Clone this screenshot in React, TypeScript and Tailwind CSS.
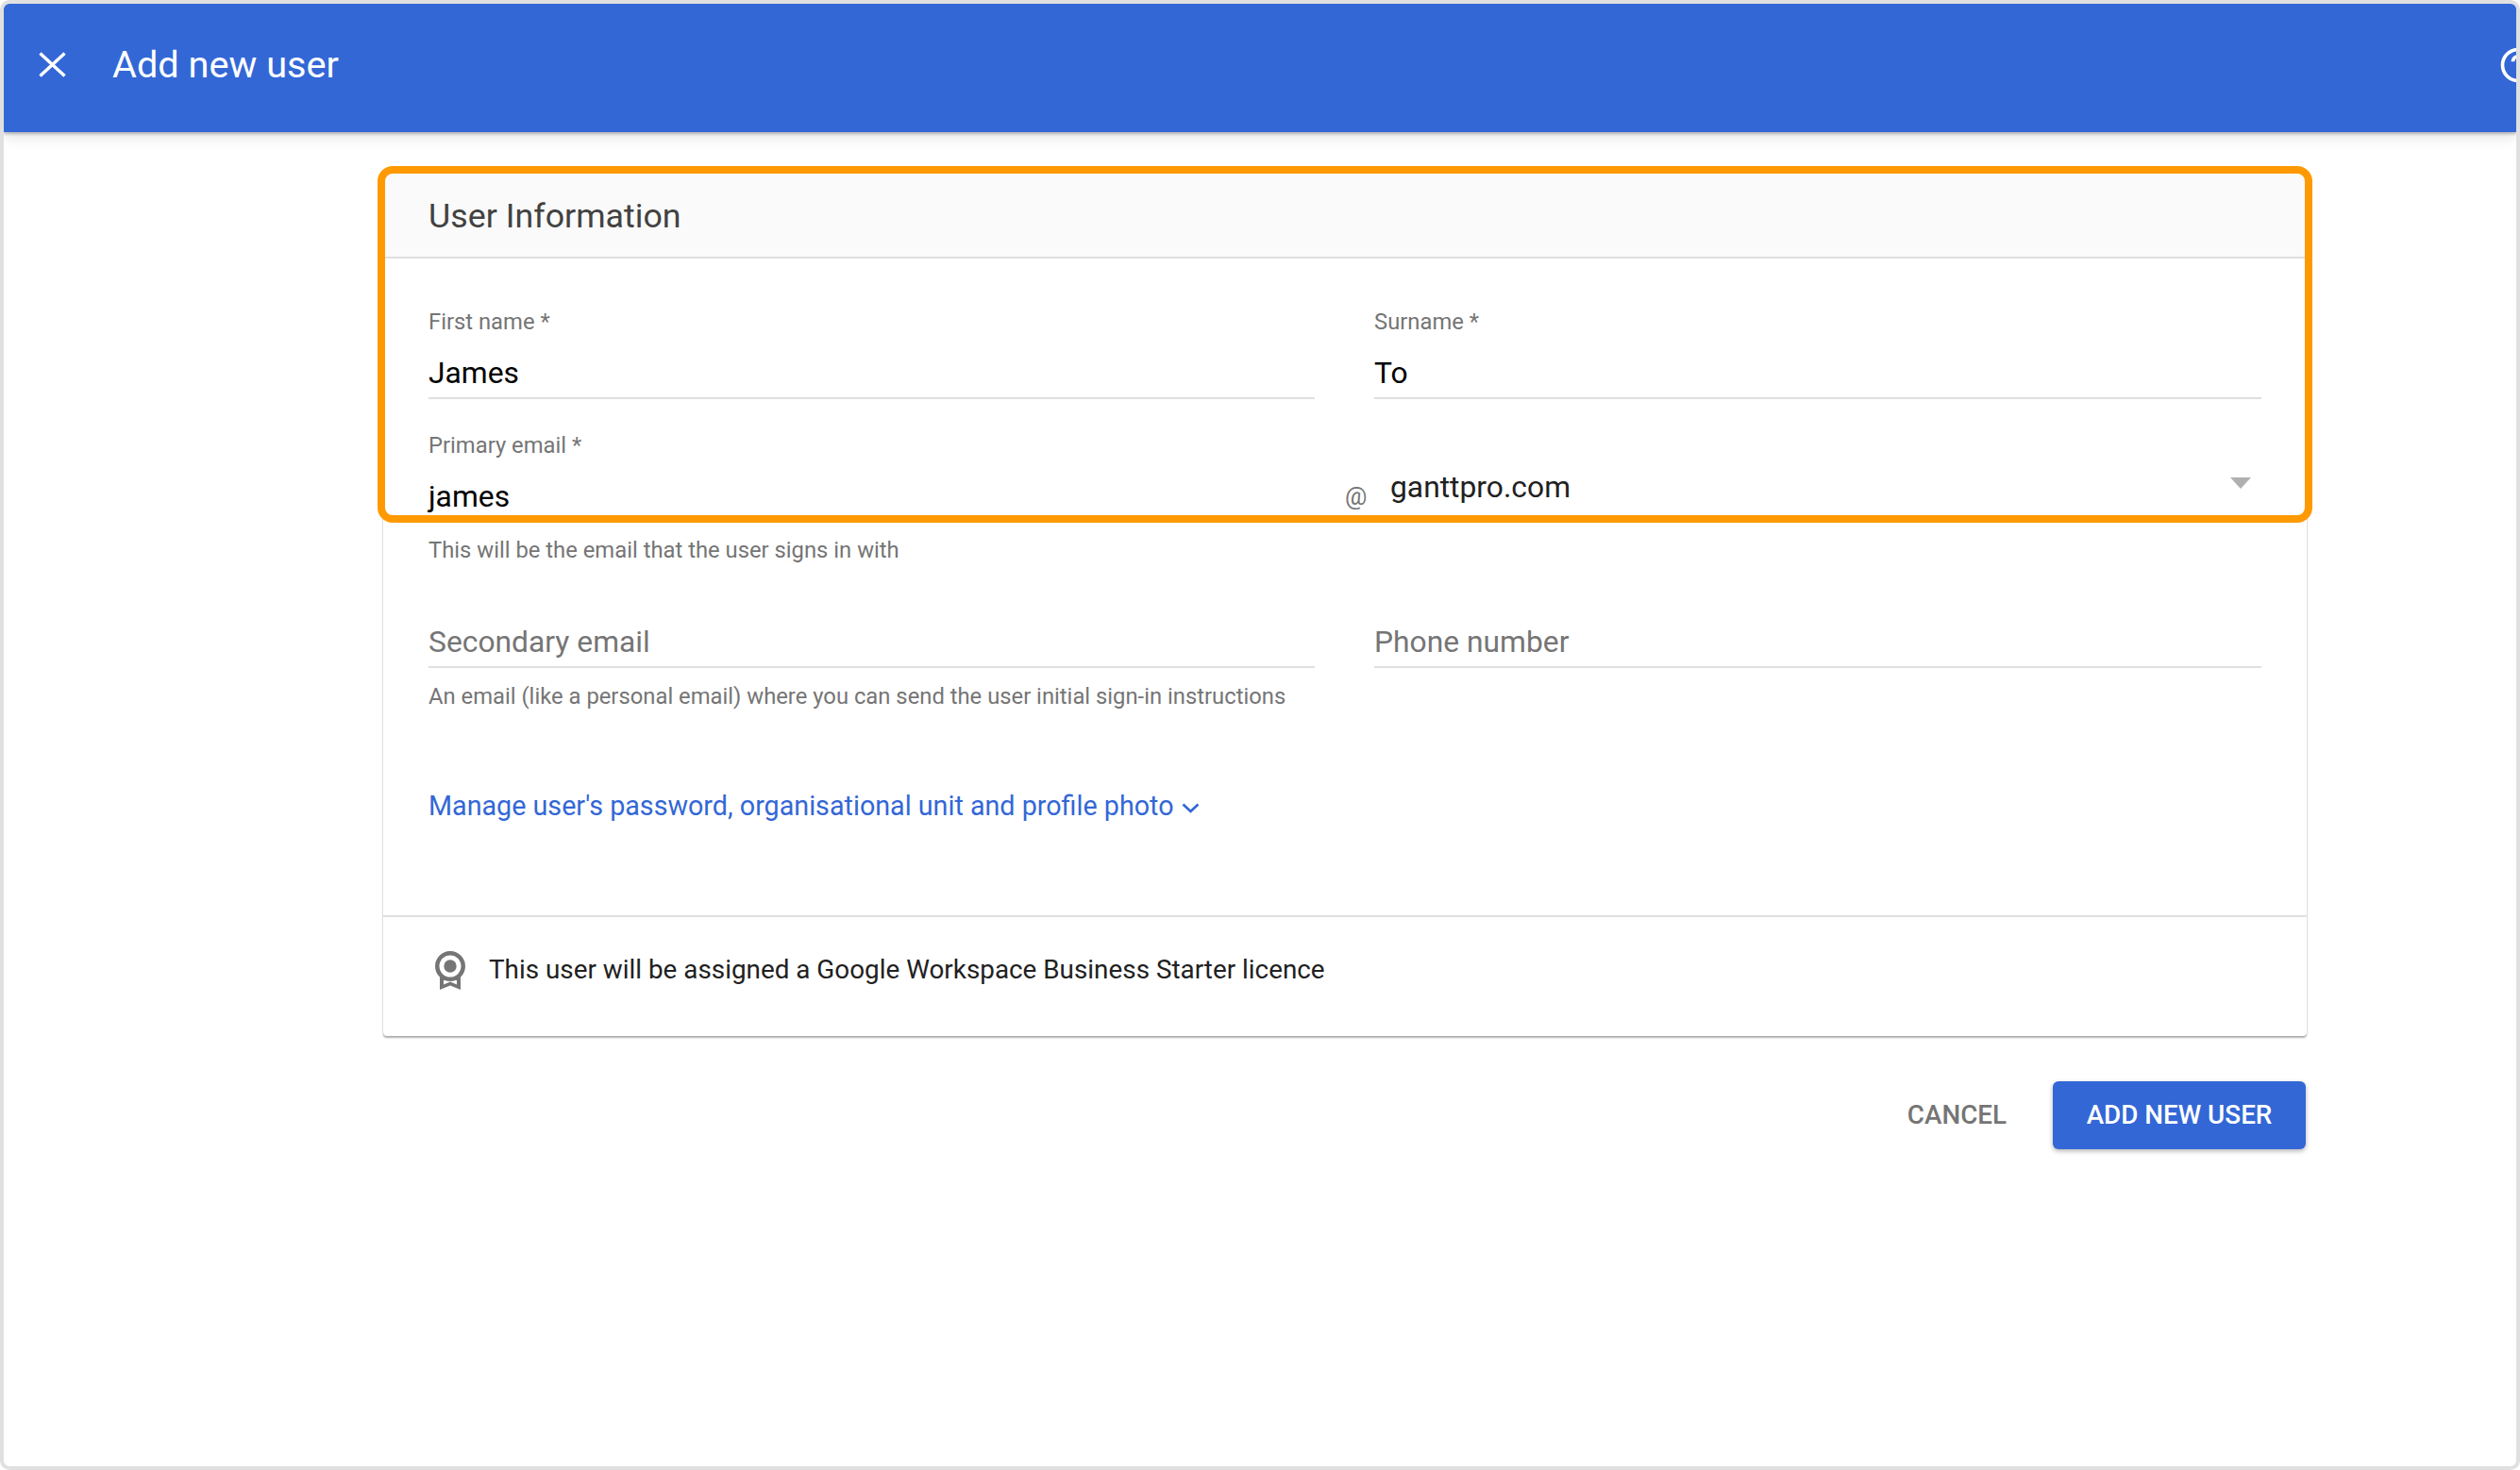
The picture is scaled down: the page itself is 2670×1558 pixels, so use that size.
import React from "react";

function Field({ label, value, placeholder, className }: { label?: string; value?: string; placeholder?: string; className?: string }) {
  return (
    <div className={className}>
      {label && <div className="h-[28px] mb-[20px] text-[23.8px] leading-[28px] text-[#757575]">{label}</div>}
      <div className={`h-[40px] text-[31.8px] leading-[40px] ${placeholder ? "text-[#757575]" : "text-black"}`}>{value ?? placeholder}</div>
      <div className="mt-[6px] h-[2px] bg-[#e0e0e0]" />
    </div>
  );
}

export default function App() {
  return (
    <div className="h-[1558px] w-[2670px] overflow-hidden rounded-[10px] border-4 border-[#e0e0e0] bg-white font-['Roboto',sans-serif]">
      <header className="flex h-[136px] items-center bg-[#3367d6] pb-[7px] pl-[37px] pr-0 shadow-[0_2px_3px_rgba(0,0,0,0.25),0_6px_14px_rgba(0,0,0,0.1)]">
        <svg viewBox="0 0 29 27" className="h-[27px] w-[29px]" fill="none" stroke="white" strokeWidth="3.4">
          <path d="M1.500 1.500L27.500 25.500M27.500 1.500L1.500 25.500" />
        </svg>
        <h1 className="ml-[49px] text-[39.7px] leading-[50px] text-white">Add new user</h1>
        <svg viewBox="0 0 24 24" className="ml-auto -mr-[24px] h-[44px] w-[44px] shrink-0" fill="white">
          <path d="M11 18h2v-2h-2v2zm1-16C6.48 2 2 6.48 2 12s4.48 10 10 10 10-4.48 10-10S17.52 2 12 2zm0 18c-4.41 0-8-3.59-8-8s3.59-8 8-8 8 3.59 8 8-3.59 8-8 8zm0-14c-2.21 0-4 1.79-4 4h2c0-1.1.9-2 2-2s2 .9 2 2c0 2-3 1.75-3 5h2c0-2.25 3-2.5 3-5 0-2.21-1.79-4-4-4z" />
        </svg>
      </header>

      <div className="relative ml-[402px] mt-[44px] w-[2038px]">
        <section className="rounded-[4px] bg-white shadow-[0_2px_2px_rgba(0,0,0,0.3),0_0_2px_rgba(0,0,0,0.18)]">
          <div className="flex h-[90px] items-center rounded-t-[4px] border-b-2 border-[#e0e0e0] bg-[#fafafa] pl-[48px] pt-[1px] text-[35.8px] leading-[44px] text-[#424242]">
            User Information
          </div>

          <div className="pl-[48px] pr-[48px]">
            <div className="grid grid-cols-[939px_940px] gap-x-[63px] pt-[53px]">
              <Field label="First name *" value="James" />
              <Field label="Surname *" value="To" />
            </div>

            <div className="mt-[35px] h-[28px] text-[23.8px] leading-[28px] text-[#757575]">Primary email *</div>
            <div className="mt-[20px] flex h-[40px] items-center">
              <div className="w-[971px] text-[31.8px] leading-[40px] text-black">james</div>
              <div className="w-[48px] text-[26px] leading-[30px] text-[#757575]">@</div>
              <div className="relative -top-[10px] flex-1 text-[31.8px] leading-[40px] text-[#212121]">ganttpro.com</div>
              <div className="relative -top-[14px] mr-[11px] h-0 w-0 border-x-[11.5px] border-t-[12px] border-x-transparent border-t-[#b0b0b0]" />
            </div>
            <div className="mt-[23px] h-[28px] text-[23.8px] leading-[28px] text-[#757575]">This will be the email that the user signs in with</div>

            <div className="mt-[63px] grid grid-cols-[939px_940px] gap-x-[63px]">
              <Field placeholder="Secondary email" />
              <Field placeholder="Phone number" />
            </div>
            <div className="mt-[16px] h-[28px] text-[23.8px] leading-[28px] text-[#757575]">
              An email (like a personal email) where you can send the user initial sign-in instructions
            </div>

            <div className="mt-[84px] flex h-[36px] items-center text-[28.7px] leading-[36px] text-[#3367d6]">
              Manage user's password, organisational unit and profile photo
              <svg viewBox="0 0 19 11" className="ml-[8px] mt-[5px] h-[11px] w-[19px]" fill="none" stroke="#3367d6" strokeWidth="2.7">
                <path d="M1.500 1.500L9.500 9L17.500 1.500" />
              </svg>
            </div>
          </div>

          <div className="mt-[98px] flex h-[128px] items-center border-t-2 border-[#e0e0e0] pb-[10px] pl-[55px]">
            <svg viewBox="0 0 32 41" className="mb-[3px] h-[41px] w-[32px]">
              <path d="M5 24H27V41L16 36.500L5 41Z" fill="#757575" />
              <path d="M9 31H23V35.500L16 32.500L9 35.500Z" fill="white" />
              <circle cx="16" cy="16" r="13.750" fill="white" stroke="#757575" strokeWidth="4.500" />
              <circle cx="16" cy="16" r="6.700" fill="#757575" />
            </svg>
            <div className="mb-[4px] ml-[25px] text-[27.85px] leading-[36px] text-[#212121]">
              This user will be assigned a Google Workspace Business Starter licence
            </div>
          </div>
        </section>

        <div className="mt-[48px] flex items-center justify-end">
          <button className="mr-[49px] text-[27.8px] font-medium leading-[36px] text-[#757575]">CANCEL</button>
          <button className="mr-[1px] h-[72px] w-[268px] rounded-[6px] bg-[#3367d6] text-[27.8px] font-medium text-white shadow-[0_2px_5px_rgba(0,0,0,0.3)]">ADD NEW USER</button>
        </div>

        <div className="pointer-events-none absolute -left-[6px] -top-[8px] h-[378px] w-[2050px] rounded-[16px] border-8 border-[#ff9900]" />
      </div>
    </div>
  );
}
